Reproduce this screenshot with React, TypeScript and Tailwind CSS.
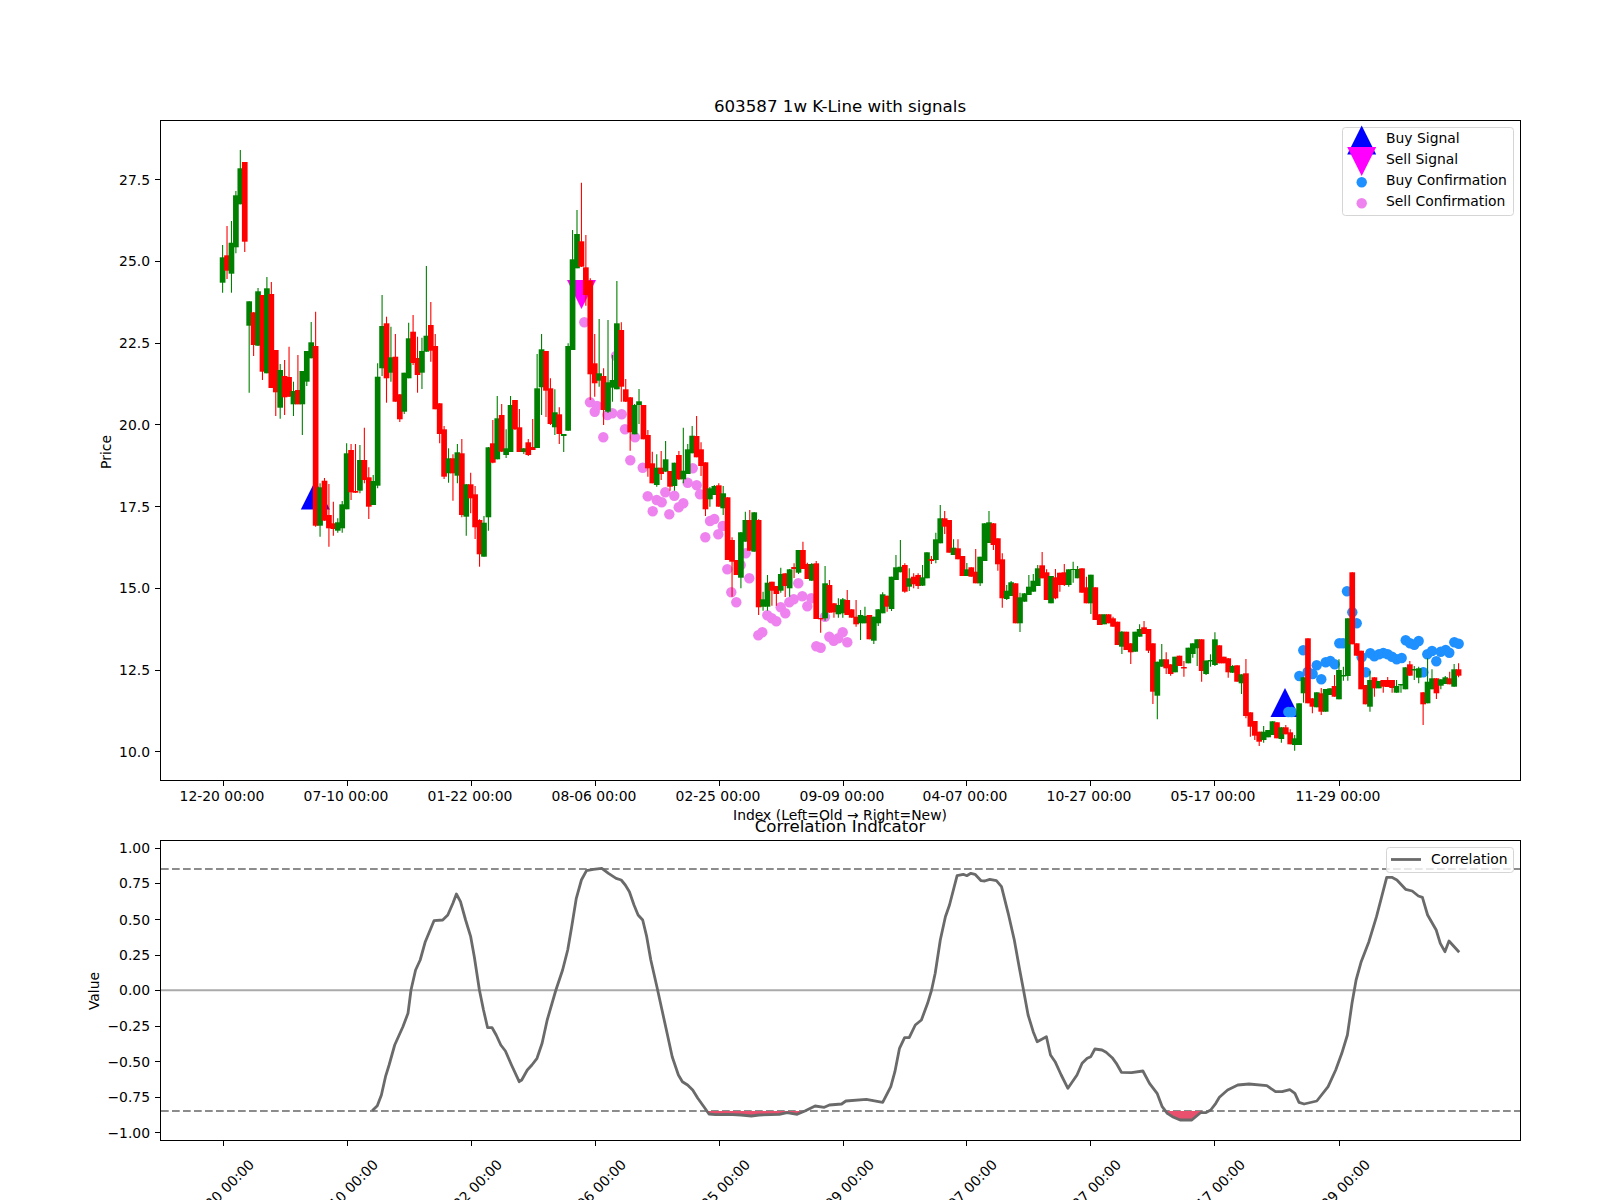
// Weekly k-line chart with signal markers and a correlation panel below it.
type Candle = ["g" | "r", number, number, number, number];

const X0 = 222.6;
const DX = 4.43;
const TICKS = ["12-20 00:00", "07-10 00:00", "01-22 00:00", "08-06 00:00", "02-25 00:00", "09-09 00:00", "04-07 00:00", "10-27 00:00", "05-17 00:00", "11-29 00:00"];
const TICK_X = [223, 347, 471, 595, 719, 843, 966, 1090, 1214, 1339];

// color, body top, body bottom, wick top, wick bottom (page pixels)
const candles: Candle[] = [
  ["g",257.3,282.7,245,292.7],["r",255.3,270.7,226,279],["g",242.7,273.7,221,292.7],["g",195.3,247.3,191,253.3],["g",168.3,204.3,150,204.3],
  ["r",162,241.7,162,252],["g",301.3,325.7,301.3,392.7],["r",312.3,345,312.3,356],["g",291.3,345.7,288,346],["r",295,371.7,295,380],
  ["g",288.3,373.3,277,373.3],["r",294,388,282,388],["r",350,392.3,350,416],["g",370,407.7,364,418.7],["r",376,397.3,360,415],
  ["r",377,396.7,346.7,397],["g",391,404.3,381.7,416],["r",390,404.3,355,404.3],["g",371,404.3,371,435],["g",351,381.7,351,386],
  ["g",342.3,358.3,322,358.3],["r",346,525.7,311.7,526.7],["g",487.3,525.7,483.3,536.7],["r",480.7,520.7,478,520.7],["r",515,528.3,484,546.7],
  ["r",523.3,529,501.7,535.7],["g",522.3,530.7,518.3,532.7],["g",504.3,528.3,501,532.7],["g",453.3,509.3,443.3,509.3],["r",450,492.3,444,500],
  ["r",491,492.7,444,493],["g",460,490.7,445,493.3],["r",460,480,427.7,483.3],["r",477.3,506.7,467.3,519],["g",481,505,475,505],
  ["g",376.7,485.7,363.3,488.3],["g",326,368.3,295,376],["r",323.3,378.3,316.7,402.7],["g",357.3,372.7,326.7,381.7],["r",356.7,401.7,334,401.7],
  ["r",394.3,419.3,394.3,422],["g",372.7,411.7,372.7,414],["g",338.3,378.3,322.7,378.3],["r",331.7,363,315,365],["r",358,375,336.7,392.7],
  ["g",351,372.7,337.7,389],["g",335.7,351.7,266,351.7],["r",325,350.7,302,361.7],["r",346,409.3,334,409.3],["r",403.3,434,403.3,443.3],
  ["r",429.3,476.7,426,479],["g",458.3,473.3,448.3,482.7],["r",458.3,473.3,454.3,500.7],["g",452.3,475.7,444,483.3],["r",453.3,515,439,517.3],
  ["g",484.3,516.7,484,535.7],["r",484.3,498.3,472.7,513.3],["r",494.3,527.3,486,539],["r",520,554.3,519.3,566.7],["g",522.7,556.7,516,556.7],
  ["g",447.3,517.3,447,530.7],["r",443.3,462.7,420,463.3],["g",418.3,459.3,396,459.3],["r",415,451.7,404,452],["g",448.3,455,429.3,458],
  ["g",405,452,396,452],["r",400,429.3,400,430],["r",427.3,452,409,452],["g",448.3,452,448,454],["r",442.3,455,439,456],
  ["r",447,450,419,450],["g",388.3,448,354,448],["g",349.3,387.3,334,415],["r",351,390.7,351,417],["r",388.3,424,378.3,425],
  ["g",412.3,427.3,389.3,435],["r",414.3,434,407.3,444],["g",434,436,434,452],["g",346,430.7,343.3,431],["g",259.3,350,230,350],
  ["g",234,268.3,210,268.3],["r",241.3,266.7,182.7,267],["r",267.3,295,235,305.7],["r",280.7,374.3,278.3,400],["r",363.3,383.3,334,396.7],
  ["g",373.3,380.7,319,386.7],["r",376,410,368.3,425],["g",382.3,411.7,320,413],["g",380,387.7,355,401.7],["g",323.3,389.3,281,389.3],
  ["r",330,386.7,322.3,401.7],["r",389.3,401.7,379,402],["r",397.3,432.3,397,450.7],["g",405,434.3,404,434.3],["g",401.3,405,389,424],
  ["r",405,439.3,405,439.3],["r",435,468.3,430,476.7],["r",463.3,483.3,451.7,483.3],["g",467.7,485,454.3,486.7],["r",467.7,474,451,480],
  ["g",459.3,471.7,441,471.7],["r",471,486.7,471,490.7],["g",462.7,486,462.7,490.7],["r",455,479.3,451,480],["g",470.7,479.3,427.7,483.3],
  ["g",449.3,474,444,474],["g",435.7,453.3,426,453.3],["r",436,457.3,416,457.3],["r",449.3,466,442.3,476],["r",462.3,509.3,462.3,516],
  ["g",488.3,499.3,487,506.7],["g",486,495,485,495],["r",485.3,506.7,483.3,506.7],["g",493.3,508.3,486,515],["r",497.3,560,497.3,560],
  ["r",540,561.7,537.3,596.7],["r",560,575,560,575],["g",532.3,577.7,532,588.3],["g",520,541.7,511.7,541.7],["r",520,550.7,510,550.7],
  ["g",512.3,551.7,512,551.7],["r",520,607.3,519.3,615],["g",599.3,606.7,591.7,610.7],["g",582.7,606.7,575,610.7],["r",581.7,590.7,581.7,605.7],
  ["r",586,594,586,605.7],["g",574,590.7,567.7,592.7],["r",573.3,586,573.3,597],["g",569.3,588.3,569,596.7],["r",567,569,563.3,578],
  ["g",550,572.7,550,574],["r",550,569,541.7,569],["r",564,579,562.7,579],["g",564,580.7,563,581],["r",563.3,619,561,619],
  ["r",618,619.3,618,632.7],["g",583.3,618.3,566,620.7],["r",585,612.7,580,612.7],["r",603.3,612.3,603,617.7],["g",605,614.3,598.3,617.7],
  ["g",599.3,613.3,598,617.7],["r",600,615,590,615],["r",609.3,617.7,609.3,617.7],["r",616.7,624.3,600,626.7],["g",615,623.3,610,640],
  ["g",616,623.3,606.7,623.3],["r",615,639.3,615,639.3],["g",616.7,640.7,616.7,644],["g",609.3,623.3,609,626],["g",594.3,613.3,592.3,613.3],
  ["r",595.7,606.7,595.7,611.7],["g",576.7,609,576.7,611],["g",567.3,580,555,580],["g",566.7,572.3,540,572.3],["r",565,591.7,563.3,592.7],
  ["g",578.3,586.7,568.3,591],["r",576.7,584.3,573.3,588.3],["r",575,586,573.3,589],["g",577.3,585.7,565,586],["g",552.3,578.3,552.3,578.3],
  ["r",559,561,556,564],["g",539.3,560,532.7,563.3],["g",518.3,543.3,505,543.3],["r",518.3,526.7,511,534],["r",520,552.7,520,552.7],
  ["g",547.7,555,539.3,555],["r",548.3,559.3,539.3,559.3],["r",556,576,556,576],["g",569.3,576,563,576],["r",567.3,576.7,567.3,576.7],
  ["r",571.7,583.3,549,583.3],["g",556.7,583.3,556.7,586],["g",523.3,561,523.3,561],["g",522.3,543,511,543],["r",523.3,545,523,550],
  ["r",538.3,564.3,538.3,570.7],["r",559.3,598.3,553.3,607.7],["g",590.7,599,585,600],["g",582.3,596,581,596],["r",583.3,623.3,583.3,623.3],
  ["g",597.3,623.3,592.7,632],["g",593.3,601.7,593,601.7],["g",586.7,595,575,595],["g",580.7,591.7,574,591.7],["g",568.3,586,565,586],
  ["r",565.3,578.3,552,578.3],["r",572.3,600,569.3,600],["g",576,603.3,576,603.3],["r",577.3,598.3,569,599.3],["r",572.7,585,572.7,591.7],
  ["r",572.3,585,564,586],["g",569.3,585,569.3,586.7],["g",569,570,561.7,582.7],["g",569,578.3,566,578.3],["r",568.3,592.7,568.3,592.7],
  ["r",587.3,603.3,576.7,603.3],["g",574.7,603.3,574.7,614],["r",587.3,620,587.3,620],["r",614.3,625,614.3,625],["g",614.3,624.3,614.3,624.3],
  ["r",614.3,623.3,614.3,623.3],["r",618.3,626.7,616.7,626.7],["r",621.7,645,621.7,645],["g",631.7,646.7,631,654],["r",631.7,650,631.7,650],
  ["r",643.3,652.3,643.3,664],["g",631.7,651.7,631.7,651.7],["g",629,636.7,624.3,636.7],["r",627.3,634,621,634],["r",629,650.7,629,653],
  ["r",643.3,691.7,643.3,704],["g",661.7,695.7,661.7,719.3],["g",659.3,666.7,644,666.7],["r",659.3,668.3,652.3,674],["r",664.3,674,664.3,675.7],
  ["g",656.7,672.3,656.7,672.3],["r",655.7,666,655.7,666],["r",667,668.5,661,676.7],["g",647.7,663.3,647.7,663.3],["g",643.3,654,643.3,657.7],
  ["g",639.3,648.3,639.3,666],["r",639.3,671,639.3,681.7],["g",660.5,674,660.5,675],["g",660,661.5,654.3,666.7],["g",639.3,665,632.3,666],
  ["r",645.3,663.3,645.3,663.3],["r",656.7,663.3,656.7,663.3],["r",658.3,672.3,658,677.7],["g",666,672.7,665,673],["r",665.3,681.7,665.3,681.7],
  ["g",674.3,683.3,674.3,694],["r",673.3,716,659,718.3],["r",712.3,726.7,712.3,736.7],["r",721,735.7,721,740],["r",731.7,741.7,731.7,746],
  ["g",731.7,740,726,742.7],["g",730,737.3,730,737.3],["g",721.3,735,721.3,735],["r",722.3,738.3,722.3,738.3],["g",727.3,739,727.3,742.7],
  ["r",727.3,734.3,725,734.3],["r",732.3,744.3,729.3,744.3],["g",738.3,745,735,750.7],["g",703.3,745,703.3,745],["g",677.3,693.3,677.3,702.7],
  ["r",638.3,703.3,638.3,703.3],["r",698.3,706.7,698.3,713.3],["g",692.3,707.3,692.3,707.3],["r",693.3,711.7,688,715],["g",689,711.7,689,711.7],
  ["g",688.3,695,688.3,695],["r",686,696.7,675,696.7],["g",670,699.3,659.3,699.3],["g",675,676.5,666.7,680.7],["g",618.3,676,618.3,680.7],
  ["r",572.3,644.3,572.3,644.3],["r",643.3,655.7,643.3,655.7],["r",650.7,689.3,650.7,689.3],["r",685,704.3,685,704.3],["g",680,706.7,671,711.7],
  ["r",677.3,688.3,677.3,696.7],["g",681,688.3,681,688.3],["r",680,686.7,680,692.7],["r",680,687,677,687],["r",680,688,680,692.7],
  ["g",686,692.7,680,692.7],["g",684,685.5,684,692.7],["g",667.3,689.3,667.3,689.3],["r",664.3,675.7,661,675.7],["g",669,670.5,666,680],
  ["g",668.3,677.7,666.7,683.3],["r",692.3,704.3,692,725],["g",681.7,703.3,658.3,703.3],["g",678.3,689.3,669.3,689.3],["r",678.3,693.3,678.3,699],
  ["g",679.3,685.7,679.3,689.3],["g",677.3,684,676,684],["r",678.3,684.3,671.7,684.3],["g",669.3,686.7,664,686.7],["r",669.3,675.7,663.3,677.3],
];

const sellDots = [
  [584.3,322.3],[616,356],[590,402.3],[594.7,411.7],[597,406],[603.3,437.3],[607.3,415],[612.3,413.3],[621.7,414.3],[625,429.3],
  [635,437.3],[630.3,460.3],[642.7,467.7],[647.7,496.3],[652.7,511.3],[656.7,500],[661.7,502.3],[665.3,492.3],[669.3,514.3],[674.3,495.7],
  [678.7,507.3],[683.3,503.3],[687.7,482.7],[692.7,468.3],[696.7,485.3],[700,494.3],[705.3,537.3],[710,521],[714.3,519],[718.3,534.3],
  [722.7,526],[727.3,569.3],[731.3,592.3],[736.3,602.3],[740.7,565],[745.7,553.3],[749.3,578.3],[758.3,635.3],[762.3,632.3],[767.3,615.3],
  [771.7,618.3],[776.3,621.3],[780.7,607.3],[785.3,613.3],[789.3,602.3],[793.7,599.3],[798.3,583.3],[802.3,596.3],[807.3,606.3],[811.3,598.3],
  [816.3,646.3],[820.7,647.7],[825,616.7],[829.3,636.7],[833.7,640.7],[838.3,638.3],[842.7,632.3],[847.3,642.3],
];

const buyDots = [
  [1288.3,712],[1291.7,712],[1299.3,676],[1303.3,650.3],[1307.7,671.7],[1312.7,674],[1316.7,665.3],[1321.3,679.3],[1325.7,662.3],[1330.3,661],
  [1334.7,664.3],[1339.3,643.3],[1343,643.3],[1347,591.3],[1352.3,612.3],[1356.7,623.3],[1361.7,657.3],[1365.7,672.3],[1370.3,653.3],[1374.3,656.3],
  [1379,654.3],[1383.3,653],[1387.7,654.3],[1392,656.7],[1396.7,659.3],[1401.7,658],[1405.7,640.3],[1410,643.3],[1414.3,644.7],[1418.7,641],
  [1423.3,672.3],[1427.3,654.3],[1432,651],[1436.3,661.3],[1440.7,651.7],[1445.7,650],[1449.3,652.7],[1454.3,642.3],[1458.7,643.7],
];

const priceTicks = [["27.5",179.5],["25.0",261.3],["22.5",343.1],["20.0",424.9],["17.5",506.6],["15.0",588.4],["12.5",670.1],["10.0",751.8]] as const;
const corrTicks = [["1.00",848.3],["0.75",883.4],["0.50",919.6],["0.25",955],["0.00",990.3],["−0.25",1026],["−0.50",1061.6],["−0.75",1097],["−1.00",1132.8]] as const;

const left: number[][] = [[612,1052],[622,1037],[630,1005],[638,950],[645,915],[656,855],[672,800],[682,760],[688,690],[697,630],[706,600],[716,545],[733,482],[750,480],[760,465],[770,430],[777,402],[785,425],[795,480],[805,530],[812,590],[822,690],[830,750],[838,803],[847,803],[855,825],[864,855],[873,873],[885,915],[900,965],[905,960],[916,930],[925,915],[935,895],[945,850],[955,780],[972,690],[985,630],[995,570],[1003,500],[1012,415],[1022,360],[1032,332],[1045,328],[1062,325],[1075,340],[1090,355],[1100,360],[1108,375],[1116,395],[1125,435],[1133,465],[1142,480],[1150,530],[1158,600],[1170,680],[1180,750],[1190,820],[1200,890],[1212,945],[1220,965],[1230,975],[1240,990],[1250,1015],[1262,1040],[1272,1062],[1285,1064],[1310,1063],[1335,1065],[1355,1068],[1370,1065],[1410,1063],[1425,1058],[1445,1063],[1460,1053],[1480,1038],[1498,1042],[1508,1035],[1532,1032]];
const right: number[][] = [[90,1023],[130,1018],[162,1027],[178,980],[186,935],[195,865],[205,833],[214,833],[226,795],[238,780],[250,730],[258,690],[265,640],[275,540],[285,470],[293,435],[308,347],[320,343],[327,347],[335,340],[343,343],[355,362],[362,363],[372,358],[385,362],[395,380],[408,460],[420,540],[430,625],[438,690],[447,765],[457,815],[465,845],[483,830],[491,885],[500,905],[512,945],[525,985],[543,945],[553,910],[563,895],[570,890],[578,867],[592,870],[600,877],[612,893],[620,910],[630,937],[650,938],[672,933],[685,970],[700,1000],[710,1040],[720,1060],[730,1070],[745,1080],[768,1080],[785,1058],[795,1058],[805,1050],[815,1030],[822,1012],[838,990],[858,975],[880,972],[915,977],[932,995],[945,995],[960,989],[970,1000],[978,1027],[988,1032],[1013,1023],[1035,980],[1050,930],[1062,880],[1073,825],[1082,730],[1090,660],[1100,605],[1115,545],[1130,470],[1150,352],[1160,352],[1170,360],[1187,388],[1200,393],[1212,408],[1220,412],[1230,465],[1247,510],[1255,550],[1264,575],[1272,543],[1292,577]];

const fromLeft = (p: number[]) => `${(60 + p[0] / 1.96).toFixed(1)},${(760 + p[1] / 3).toFixed(1)}`;
const fromRight = (p: number[]) => `${(800 + p[0] / 1.96).toFixed(1)},${(760 + p[1] / 3).toFixed(1)}`;
const corrLine = [...left.map(fromLeft), ...right.map(fromRight)].join(" ");
const fillA = [[1268,1053],[1272,1062],[1285,1064],[1310,1063],[1335,1065],[1355,1068],[1370,1065],[1410,1063],[1425,1058],[1445,1063],[1458,1053]].map(fromLeft).join(" ");
const fillB = [[718,1053],[720,1060],[730,1070],[745,1080],[768,1080],[785,1058],[788,1053]].map(fromRight).join(" ");

const label = "fill-black text-[13.9px]";

function Triangle({ x, y, size, down, color }: { x: number; y: number; size: number; down?: boolean; color: string }) {
  const h = size / 2;
  const pts = down
    ? `${x - h},${y - h} ${x + h},${y - h} ${x},${y + h}`
    : `${x - h},${y + h} ${x + h},${y + h} ${x},${y - h}`;
  return <polygon points={pts} fill={color} />;
}

function PriceChart() {
  return (
    <svg width={1600} height={820} viewBox="0 0 1600 820" className="block shrink-0 overflow-visible">
      <text x={840} y={112} textAnchor="middle" className="fill-black text-[16.67px]">603587 1w K-Line with signals</text>
      <text x={0} y={0} transform="translate(111 452) rotate(-90)" textAnchor="middle" className={label}>Price</text>

      <Triangle x={315.3} y={495} size={29} color="#0000ff" />
      <Triangle x={1285} y={702.5} size={29} color="#0000ff" />
      <Triangle x={581.5} y={294.5} size={29} down color="#ff00ff" />
      {sellDots.map(([x, y], i) => <circle key={i} cx={x} cy={y} r={5.2} fill="#ee82ee" />)}
      {buyDots.map(([x, y], i) => <circle key={i} cx={x} cy={y} r={5.2} fill="#1e90ff" />)}

      {candles.map(([c, top, bot, wTop, wBot], i) => {
        const x = X0 + DX * i;
        const color = c === "g" ? "#008000" : "#ff0000";
        return (
          <g key={i}>
            <line x1={x} x2={x} y1={wTop} y2={wBot} stroke={color} strokeWidth={1.1} />
            <rect x={x - 2.85} y={top} width={5.7} height={bot - top} fill={color} />
          </g>
        );
      })}

      <rect x={160.5} y={120.5} width={1360} height={660} fill="none" stroke="#000" strokeWidth={1} shapeRendering="crispEdges" />
      {priceTicks.map(([t, y]) => (
        <g key={t}>
          <line x1={155} x2={160} y1={y} y2={y} stroke="#000" strokeWidth={1} shapeRendering="crispEdges" />
          <text x={150} y={y + 5} textAnchor="end" className={label}>{t}</text>
        </g>
      ))}
      {TICKS.map((t, i) => (
        <g key={t}>
          <line x1={TICK_X[i]} x2={TICK_X[i]} y1={781} y2={786} stroke="#000" strokeWidth={1} shapeRendering="crispEdges" />
          <text x={TICK_X[i] - 1} y={801} textAnchor="middle" className={label}>{t}</text>
        </g>
      ))}
      <text x={840} y={820} textAnchor="middle" className={label}>Index (Left=Old → Right=New)</text>

      <rect x={1342.5} y={127.5} width={171} height={88} rx={3} fill="#ffffff" fillOpacity={0.8} stroke="#d5d5d5" />
      <Triangle x={1361.7} y={140} size={29} color="#0000ff" />
      <Triangle x={1361.7} y={161.5} size={29} down color="#ff00ff" />
      <circle cx={1361.7} cy={182.3} r={5.2} fill="#1e90ff" />
      <circle cx={1361.7} cy={203.3} r={5.2} fill="#ee82ee" />
      <text x={1386} y={143.3} className={label}>Buy Signal</text>
      <text x={1386} y={164.3} className={label}>Sell Signal</text>
      <text x={1386} y={185.3} className={label}>Buy Confirmation</text>
      <text x={1386} y={206} className={label}>Sell Confirmation</text>
    </svg>
  );
}

function CorrelationChart() {
  return (
    <svg width={1600} height={380} viewBox="0 820 1600 380" className="block shrink-0">
      <text x={840} y={832} textAnchor="middle" className="fill-black text-[16.67px]">Correlation Indicator</text>
      <text x={0} y={0} transform="translate(99 991) rotate(-90)" textAnchor="middle" className={label}>Value</text>

      <line x1={161} x2={1520} y1={990.3} y2={990.3} stroke="#aaaaaa" strokeWidth={2} />
      <line x1={161} x2={1520} y1={869} y2={869} stroke="#8c8c8c" strokeWidth={2.1} strokeDasharray="7.7 3.3" />
      <line x1={161} x2={1520} y1={1111} y2={1111} stroke="#8c8c8c" strokeWidth={2.1} strokeDasharray="7.7 3.3" />
      <polygon points={fillA} fill="#e8506e" />
      <polygon points={fillB} fill="#e8506e" />
      <polyline points={corrLine} fill="none" stroke="#6a6a6a" strokeWidth={2.8} strokeLinejoin="round" />

      <rect x={160.5} y={840.5} width={1360} height={300} fill="none" stroke="#000" strokeWidth={1} shapeRendering="crispEdges" />
      {corrTicks.map(([t, y]) => (
        <g key={t}>
          <line x1={155} x2={160} y1={y} y2={y} stroke="#000" strokeWidth={1} shapeRendering="crispEdges" />
          <text x={150} y={y + 5} textAnchor="end" className={label}>{t}</text>
        </g>
      ))}
      {TICKS.map((t, i) => (
        <g key={t}>
          <line x1={TICK_X[i]} x2={TICK_X[i]} y1={1141} y2={1146} stroke="#000" strokeWidth={1} shapeRendering="crispEdges" />
          <text transform={`translate(${TICK_X[i] - 1.5} 1192) rotate(-45)`} y={5} textAnchor="middle" className={label}>{t}</text>
        </g>
      ))}

      <rect x={1386.5} y={847.5} width={127} height={25} rx={3} fill="#ffffff" fillOpacity={0.8} stroke="#d5d5d5" />
      <line x1={1391} x2={1421} y1={859.5} y2={859.5} stroke="#6a6a6a" strokeWidth={2.8} />
      <text x={1431} y={863.5} className={label}>Correlation</text>
    </svg>
  );
}

export default function App() {
  return (
    <div className="flex h-[1200px] w-[1600px] flex-col overflow-hidden bg-white font-['DejaVu_Sans',sans-serif]">
      <PriceChart />
      <CorrelationChart />
    </div>
  );
}
